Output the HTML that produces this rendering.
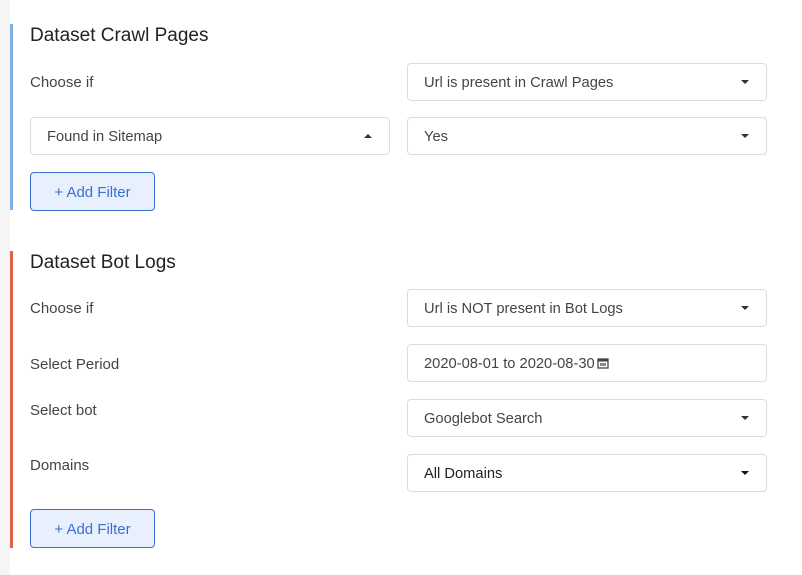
<!DOCTYPE html>
<html><head><style>
body{margin:0;width:802px;height:575px;background:#fff;font-family:"Liberation Sans",sans-serif;position:relative;overflow:hidden}
.gut{position:absolute;left:0;top:0;width:10px;height:575px;background:#f5f5f5}
.bar{position:absolute;left:10px;width:3px}
.t{position:absolute;left:30px;font-size:19px;color:#222}
.l{position:absolute;left:30px;font-size:15px;color:#444}
.s{position:absolute;height:36px;border:1px solid #dcdcdc;border-radius:4px;box-sizing:content-box;font-size:14.7px;color:#444;line-height:38px;padding-left:16px;background:#fff}
.s.r{left:407px;width:342px}
.s.lf{left:30px;width:342px}
.car{position:absolute;right:17px;top:16px;width:0;height:0;border-left:4px solid transparent;border-right:4px solid transparent;border-top:4px solid #333}
.up{border-top:none;border-bottom:4px solid #333}
.b{position:absolute;left:30px;width:123px;height:37px;border:1px solid #3b6fd4;border-radius:4px;background:#e8f0fd;color:#3b6fd4;font-size:15px;line-height:39px;text-align:center}
</style></head><body>
<div class="gut"></div>
<div class="bar" style="top:24px;height:186px;background:#7fb1e3"></div>
<div class="bar" style="top:251px;height:297px;background:#e0624a"></div>
<div class="t" style="top:25px">Dataset Crawl Pages</div>
<div class="l" style="top:74px">Choose if</div>
<div class="s r" style="top:63px">Url is present in Crawl Pages<span class="car"></span></div>
<div class="s lf" style="top:117px">Found in Sitemap<span class="car up"></span></div>
<div class="s r" style="top:117px">Yes<span class="car"></span></div>
<div class="b" style="top:172px">+ Add Filter</div>
<div class="t" style="top:252px">Dataset Bot Logs</div>
<div class="l" style="top:300px">Choose if</div>
<div class="s r" style="top:289px">Url is NOT present in Bot Logs<span class="car"></span></div>
<div class="l" style="top:356px">Select Period</div>
<div class="s r" style="top:344px">2020-08-01 to 2020-08-30 <svg width="12" height="12" viewBox="0 0 12 12" style="vertical-align:-1px;margin-left:-2px"><rect x="1" y="2" width="10" height="9" fill="none" stroke="#444" stroke-width="1.3"/><rect x="1" y="2" width="10" height="2.5" fill="#444"/><rect x="3" y="6" width="6" height="3" fill="#888"/></svg></div>
<div class="l" style="top:402px">Select bot</div>
<div class="s r" style="top:399px">Googlebot Search<span class="car"></span></div>
<div class="l" style="top:457px">Domains</div>
<div class="s r" style="top:454px;color:#222">All Domains<span class="car" style="border-top-color:#111"></span></div>
<div class="b" style="top:509px">+ Add Filter</div>
</body></html>
